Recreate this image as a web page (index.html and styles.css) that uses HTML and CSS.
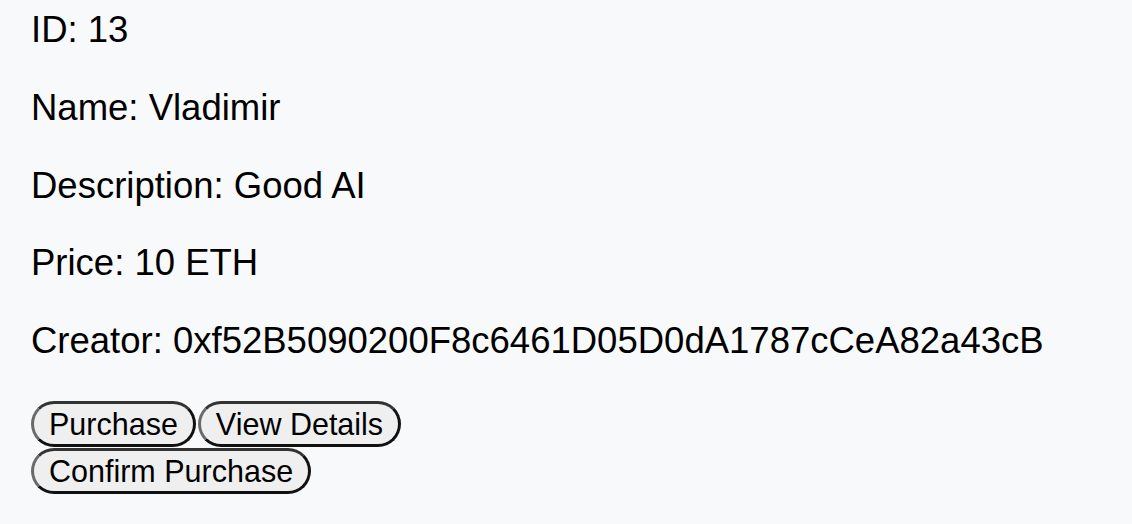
FILE: index.html
```html
<!DOCTYPE html>
<html lang="en">
<head>
<meta charset="utf-8">
<title>AI Model</title>
<link rel="stylesheet" href="styles.css">
</head>
<body>
<div class="card">
  <div class="info">
    <p class="field">ID: 13</p>
    <p class="field">Name: Vladimir</p>
    <p class="field">Description: Good AI</p>
    <p class="field">Price: 10 ETH</p>
    <p class="field">Creator: 0xf52B5090200F8c6461D05D0dA1787cCeA82a43cB</p>
  </div>
  <div class="actions">
    <div class="row">
      <button class="btn">Purchase</button>
      <button class="btn">View Details</button>
    </div>
    <div class="row">
      <button class="btn">Confirm Purchase</button>
    </div>
  </div>
</div>
</body>
</html>
```

FILE: styles.css
```css
html, body {
  margin: 0;
  padding: 0;
  background: #f8f9fb;
  height: 100%;
}

body {
  font-family: "Liberation Sans", Arial, Helvetica, sans-serif;
  color: #000;
}

.card {
  padding: 10px 0 0 31px;
}

.info {
  display: flex;
  flex-direction: column;
  gap: 37.75px;
}

.field {
  margin: 0;
  font-size: 36.5px;
  line-height: 40px;
}

.actions {
  margin-top: 40px;
  display: flex;
  flex-direction: column;
  gap: 1px;
}

.row {
  display: flex;
  gap: 2px;
}

.btn {
  font-family: "Liberation Sans", Arial, Helvetica, sans-serif;
  font-size: 30.5px;
  line-height: 34px;
  padding: 3px 15px;
  color: #000;
  background: #efefef;
  border: 3px solid #111;
  border-right-width: 3.5px;
  border-bottom-width: 3.5px;
  border-top-color: #333;
  border-left-color: #6a6a6a;
  border-radius: 24px;
  cursor: pointer;
}
```
